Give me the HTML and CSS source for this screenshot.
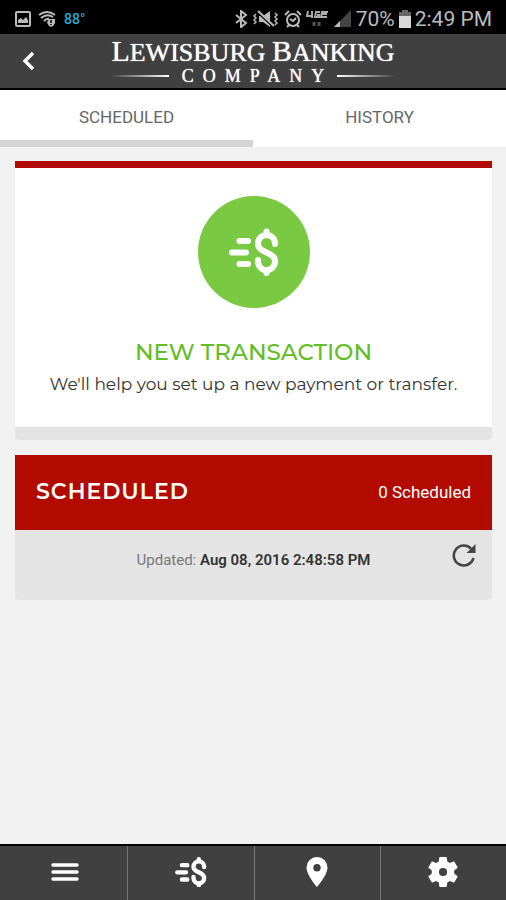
FILE: index.html
```html
<!DOCTYPE html>
<html lang="en">
<head>
	<meta charset="UTF-8">
	<meta name="viewport" content="width=device-width, initial-scale=1.0">
	<title>Lewisburg Banking Company</title>
	<link rel="stylesheet" href="styles.css">
</head>
<body>
	<!-- Shared icons -->
	<svg class="hidden" aria-hidden="true">
		<symbol id="icon-pay" viewBox="0 0 50 48">
			<g fill="none" stroke="currentColor" stroke-linecap="round">
				<path d="M10.500 13H19M3 24.500H17M10.500 36H19"/>
				<path d="M46 16V15.500A8.500 8.500 0 0 0 29 15.500C29 20 32 22 37.500 24.500C43 27 46 29 46 33.500A8.500 8.500 0 0 1 29 33.500V32"/>
				<path d="M37.500 3.500V6M37.500 43V45"/>
			</g>
		</symbol>
	</svg>

	<!-- Status bar -->
	<div class="status-bar">
		<div class="status-group">
			<svg width="18" height="18" viewBox="0 0 18 18"><rect x="2" y="2" width="14" height="14" rx="1" fill="none" stroke="#bbb" stroke-width="2"/><path d="M4 13V10L7 8L9 10L12 7L14 10V13Z" fill="#bbb"/></svg>
			<svg width="20" height="18" viewBox="0 0 20 18"><g fill="none" stroke="#bbb" stroke-width="2"><path d="M1 5Q9-1 17 5M3 8Q9 3 15 7M6 11Q9 8 11 9"/></g><path d="M9 12L11 9H17V13Q16 16 13 17Q10 16 9 12Z" fill="#bbb"/><path d="M13 10V13M13 14V15" stroke="#000" stroke-width="1.500"/></svg>
			<span class="temperature">88°</span>
		</div>
		<div class="status-group">
			<svg width="14" height="18" viewBox="0 0 14 18"><path d="M2 5L12 13L7 17V1L12 5L2 13" fill="none" stroke="#bbb" stroke-width="2"/></svg>
			<svg width="28" height="18" viewBox="0 0 28 18"><path d="M7 6H11L18 1V17L11 12H7Z" fill="#bbb"/><path d="M6 2L21 16" stroke="#000" stroke-width="3"/><path d="M6 1L22 16" stroke="#bbb" stroke-width="2"/><path d="M4 4L2 6L4 8L2 10L4 12L2 14M23 3L25 5L23 7L25 9L23 11L25 13L23 15" fill="none" stroke="#bbb" stroke-width="1.500"/></svg>
			<svg width="18" height="18" viewBox="0 0 18 18"><g fill="none" stroke="#bbb" stroke-width="2"><circle cx="9" cy="10" r="6"/><path d="M1 5L5 1M13 1L17 5M6 9L9 11L12 8M5 15L3 17M13 15L15 17"/></g></svg>
			<svg width="24" height="18" viewBox="0 0 24 18"><path d="M2 1L1 6H7M6 1V8M14 2H10L9 7H13V5H11M22 2H16L15 7H21M16 4H21" fill="none" stroke="#aaa" stroke-width="2"/><path d="M8 12V16M13 12V16" stroke="#555" stroke-width="3"/></svg>
			<svg width="18" height="18" viewBox="0 0 18 18"><path d="M0 17L17 0V17Z" fill="#444"/><path d="M0 17L6 11V17Z" fill="#bbb"/></svg>
			<span>70%</span>
			<svg width="12" height="18" viewBox="0 0 12 18"><path d="M3 0H9V2H12V18H0V2H3Z" fill="#666"/><path d="M0 6H12V18H0Z" fill="#d8d8d8"/></svg>
			<span>2:49 PM</span>
		</div>
	</div>

	<!-- Header -->
	<header class="header">
		<button class="back-button" aria-label="Back">
			<svg width="16" height="20" viewBox="0 0 16 20"><path d="M13 2L5 10L13 18" fill="none" stroke="currentColor" stroke-width="3.400"/></svg>
		</button>
		<div class="brand">
			<div class="brand-name"><b>L</b>EWISBURG <b>B</b>ANKING</div>
			<div class="brand-sub"><span class="rule"></span><span class="brand-company">COMPANY</span><span class="rule rule-right"></span></div>
		</div>
	</header>

	<nav class="tabs">
		<a href="#scheduled" class="tab active">SCHEDULED</a>
		<a href="#history" class="tab">HISTORY</a>
	</nav>

	<main class="content">
		<a href="#new" class="card new-transaction">
			<span class="circle"><svg class="pay-icon" width="50" height="48"><use href="#icon-pay"/></svg></span>
			<span class="card-title">NEW TRANSACTION</span>
			<span class="card-text">We'll help you set up a new payment or transfer.</span>
		</a>

		<section class="card scheduled" id="scheduled">
			<div class="scheduled-head">
				<h2>SCHEDULED</h2>
				<span>0 Scheduled</span>
			</div>
			<div class="scheduled-foot">
				<p>Updated: <strong>Aug 08, 2016 2:48:58 PM</strong></p>
				<button class="refresh-button" aria-label="Refresh">
					<svg width="24" height="24" viewBox="0 0 24 24"><path d="M19 5.500A10 10 0 1 0 21.500 15" fill="none" stroke="currentColor" stroke-width="2.600"/><path d="M23.500 1V10H14.500Z" fill="currentColor"/></svg>
				</button>
			</div>
		</section>
	</main>

	<!-- Bottom navigation -->
	<nav class="bottom-nav">
		<a href="#menu" aria-label="Menu"><svg width="28" height="20" viewBox="0 0 28 20"><path d="M2 3H26M2 10H26M2 17H26" stroke="currentColor" stroke-width="3.400" stroke-linecap="round"/></svg></a>
		<a href="#new" aria-label="Transactions"><svg class="pay-icon pay-icon-small" width="32" height="30"><use href="#icon-pay"/></svg></a>
		<a href="#locations" aria-label="Locations"><svg width="22" height="30" viewBox="0 0 22 30"><path fill-rule="evenodd" d="M11 0A10.500 10.500 0 0 0 .500 10.500C.500 18 11 30 11 30S21.500 18 21.500 10.500A10.500 10.500 0 0 0 11 0ZM11 7A3.700 3.700 0 1 1 11 14.400A3.700 3.700 0 1 1 11 7Z" fill="currentColor"/></svg></a>
		<a href="#settings" aria-label="Settings"><svg width="36" height="36" viewBox="0 0 24 24"><path fill="currentColor" d="M19.430 12.980c.040-.320.070-.640.070-.980s-.030-.660-.070-.980l2.110-1.650c.190-.150.240-.420.120-.640l-2-3.460c-.120-.220-.390-.300-.610-.220l-2.490 1c-.520-.400-1.080-.730-1.690-.980l-.380-2.650C14.460 2.180 14.250 2 14 2h-4c-.250 0-.460.180-.490.420l-.380 2.650c-.610.250-1.170.590-1.690.980l-2.490-1c-.230-.090-.490 0-.610.220l-2 3.460c-.130.220-.070.490.120.640l2.110 1.650c-.040.320-.070.650-.070.980s.030.660.070.980l-2.110 1.650c-.190.150-.240.420-.120.640l2 3.460c.120.220.390.300.610.220l2.490-1c.520.400 1.080.730 1.690.980l.380 2.650c.030.240.240.420.490.420h4c.250 0 .460-.180.490-.420l.380-2.650c.610-.250 1.170-.590 1.690-.980l2.490 1c.230.090.490 0 .610-.220l2-3.460c.120-.220.070-.490-.120-.640l-2.110-1.650zM12 14.700a2.700 2.700 0 1 1 0-5.400 2.700 2.700 0 0 1 0 5.400z"/></svg></a>
	</nav>
</body>
</html>
```

FILE: styles.css
```css
* { box-sizing: border-box; }
body { margin: 0; min-height: 100vh; display: flex; flex-direction: column; background-color: #f1f1f1; color: #333; font-family: Roboto, sans-serif; font-size: 17px; }
a { color: inherit; text-decoration: none; }
button { padding: 0; border: none; background: none; color: inherit; cursor: pointer; }
svg { display: block; flex-shrink: 0; }
.hidden { display: none; }
.pay-icon { stroke-width: 6px; }
.pay-icon-small { stroke-width: 7px; }

.status-bar { height: 34px; padding: 3px 14px 0; display: flex; justify-content: space-between; align-items: center; background-color: #000; color: #bbb; font-size: 21px; }
.status-group { display: flex; align-items: center; gap: 4px; white-space: nowrap; }
.status-group:first-child { gap: 6px; }
.temperature { color: #2ba6d4; font-size: 14px; font-weight: 500; }

.header { height: 56px; padding: 0 20px; display: grid; grid-template-columns: 16px 1fr 16px; align-items: center; background-color: #404040; border-bottom: 2px solid #000; color: #fff; }
.brand { display: flex; flex-direction: column; align-items: center; font-family: "Liberation Serif", serif; text-shadow: 0 0 1px #fff; }
.brand-name { font-size: 26px; line-height: 28px; white-space: nowrap; }
.brand-name b { font-size: 30px; font-weight: normal; }
.brand-sub { width: 286px; display: flex; align-items: center; }
.brand-company { padding-left: 13px; padding-right: 4px; font-size: 18px; line-height: 18px; letter-spacing: 9px; }
.rule { flex: 1; height: 2px; background: linear-gradient(to right, transparent, #fff); }
.rule-right { background: linear-gradient(to left, transparent, #fff); }

.tabs { height: 57px; display: flex; background-color: #fff; }
.tab { flex: 1; padding-bottom: 3px; display: flex; align-items: center; justify-content: center; color: #666; }
.tab.active { padding: 4px 0 0; border-bottom: 7px solid #d5d5d5; }

.content { flex: 1; padding: 14px 14px 15px 15px; display: flex; flex-direction: column; gap: 15px; }
.card { border-radius: 0 0 5px 5px; }
.new-transaction { padding: 28px 16px 31px; display: flex; flex-direction: column; align-items: center; background-color: #fff; border-top: 7px solid #b30a00; border-bottom: 13px solid #e3e3e3; text-align: center; }
.circle { width: 112px; height: 112px; display: flex; align-items: center; justify-content: center; border-radius: 50%; background-color: #79c943; color: #fff; }
.card-title { margin-top: 30px; color: #63bd26; font-family: Montserrat, Inter, sans-serif; font-size: 23px; font-weight: 500; line-height: 28px; }
.card-text { margin-top: 6px; font-family: Montserrat, Inter, sans-serif; font-size: 17px; line-height: 24px; }

.scheduled { overflow: hidden; background-color: #e4e4e4; }
.scheduled-head { height: 75px; padding: 0 21px 2px; display: flex; justify-content: space-between; align-items: center; background-color: #b30a00; color: #fff; }
.scheduled-head h2 { margin: 0; font-family: Montserrat, Inter, sans-serif; font-size: 22px; font-weight: 600; letter-spacing: 1px; }
.scheduled-foot { height: 70px; padding: 13px 16px; display: grid; grid-template-columns: 24px 1fr 24px; align-items: start; }
.scheduled-foot p { grid-column: 2; margin: 7px 0 0; color: #777; font-size: 15px; line-height: 20px; text-align: center; }
.scheduled-foot strong { color: #333; font-weight: 600; }
.refresh-button { color: #444; }

.bottom-nav { height: 56px; padding-left: 2px; display: flex; background-color: #404040; border-top: 2px solid #000; color: #fff; }
.bottom-nav a { flex: 1; padding-bottom: 2px; display: flex; align-items: center; justify-content: center; }
.bottom-nav a + a { border-left: 1px solid #777; }
```
